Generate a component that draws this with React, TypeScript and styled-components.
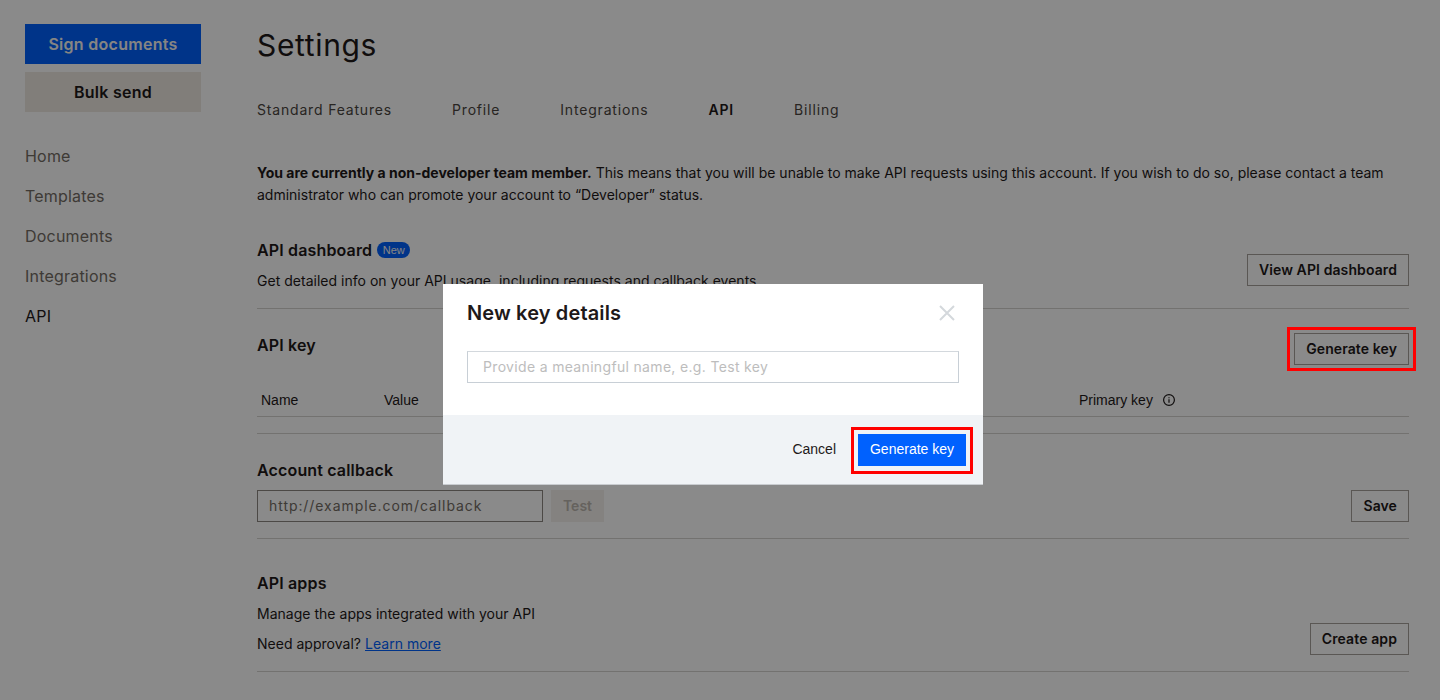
import React from "react";
import styled, { createGlobalStyle, css } from "styled-components";

const Global = createGlobalStyle`
  html, body { margin: 0; padding: 0; height: 700px; overflow: hidden; background: #fff; }
  body { font-family: Inter, "Liberation Sans", sans-serif; color: #1e1919; }
  * { box-sizing: border-box; }
`;

const highlight = css`
  position: relative;
  &::after {
    content: "";
    position: absolute;
    z-index: 20;
    pointer-events: none;
    left: -8px; right: -8px; top: -7px; bottom: -7px;
    border: 3px solid #ff0000;
  }
`;

const Page = styled.div`display: flex; width: 1440px; height: 700px;`;
const Sidebar = styled.aside`width: 257px; padding: 24px 56px 0 25px; flex: none;`;
const SideButton = styled.div<{ $primary?: boolean }>`
  height: 40px; width: 176px; margin-bottom: 8px;
  display: flex; align-items: center; justify-content: center;
  font-size: 16px; font-weight: 600; letter-spacing: .28px;
  background: ${p => (p.$primary ? "#0061fe" : "#eee9e2")};
  color: ${p => (p.$primary ? "#f7f5f2" : "#1e1919")};
`;
const Nav = styled.nav`margin-top: 24px; display: flex; flex-direction: column;`;
const NavItem = styled.a<{ $active?: boolean }>`
  height: 40px; display: flex; align-items: center; font-size: 16px; letter-spacing: .2px;
  color: ${p => (p.$active ? "#1e1919" : "#736c64")};
`;
const Main = styled.main`width: 1152px; flex: none;`;
const Title = styled.h1`
  margin: 25px 0 0; height: 40px; line-height: 40px; font-size: 30px; font-weight: 400; letter-spacing: .65px;
`;
const Tabs = styled.div`display: flex; gap: 60px; margin-top: 35px; height: 20px;`;
const Tab = styled.span<{ $active?: boolean }>`
  font-size: 14px; line-height: 20px; letter-spacing: .82px;
  font-weight: ${p => (p.$active ? 600 : 400)};
  color: ${p => (p.$active ? "#1e1919" : "#4a4540")};
`;
const Notice = styled.p`margin: 42px 0 0; font-size: 14px; line-height: 22px; letter-spacing: 0; color: #1e1919;`;
const Section = styled.section<{ $h: number; $pt: number }>`
  height: ${p => p.$h}px; padding-top: ${p => p.$pt}px;
  border-bottom: 1px solid #d5d3cf;
`;
const Row = styled.div`display: flex; justify-content: space-between; align-items: flex-start;`;
const Heading = styled.h2`
  margin: 0; font-size: 16px; line-height: 24px; font-weight: 600; letter-spacing: .15px;
  display: flex; align-items: center; gap: 5px;
`;
const Badge = styled.span`
  height: 16px; padding: 0 5.5px; border-radius: 8px; background: #0061fe; color: #f7f5f2;
  font-family: "Liberation Sans", sans-serif; letter-spacing: 0;
  font-size: 11px; line-height: 16px; font-weight: 400;
`;
const Text = styled.p<{ $mt?: number }>`
  margin: ${p => p.$mt ?? 0}px 0 0; font-size: 14px; line-height: 22px; letter-spacing: .02px; color: #1e1919;
`;
const OutlineButton = styled.div<{ $mark?: boolean; $top?: number }>`
  height: 32px; padding: 0 11px 2px; border: 1px solid #a6a29c;
  margin-top: ${p => p.$top ?? 0}px;
  display: flex; align-items: center; font-size: 14px; font-weight: 600; letter-spacing: .1px; white-space: nowrap;
  ${p => p.$mark && highlight}
`;
const TableHead = styled.div`
  display: grid; grid-template-columns: 123px 695px 1fr; padding: 3px 0 0 4px; margin-top: 24px; height: 28px;
  border-bottom: 1px solid #d5d3cf;
  font-family: "Liberation Sans", sans-serif; font-size: 14px; line-height: 16px; color: #1e1919;
`;
const HeadCell = styled.span`display: flex; align-items: center; gap: 9px; height: 16px;`;
const InputRow = styled.div`display: flex; gap: 8px; margin-top: 8px;`;
const CallbackInput = styled.div`
  width: 286px; height: 32px; border: 1px solid #8c8781; padding: 0 11px 2px;
  display: flex; align-items: center; font-size: 14px; letter-spacing: .93px; color: #736c64;
`;
const DisabledButton = styled.div`
  width: 53px; height: 32px; background: #f4f1ec; color: #bbb5ae; padding-bottom: 2px;
  display: flex; align-items: center; justify-content: center; font-size: 14px; font-weight: 600;
`;
const Link = styled.a`color: #0061fe; text-decoration: underline;`;
const Overlay = styled.div`
  position: fixed; inset: 0; z-index: 10; background: rgba(0,0,0,.46);
  display: flex; justify-content: center; padding-right: 14px;
`;
const Modal = styled.div`
  width: 540px; height: 201px; margin-top: 284px; background: #fff; display: flex; flex-direction: column;
  border-bottom: 1px solid #c9ccd0;
`;
const ModalBody = styled.div`height: 131px; padding: 17px 24px 0;`;
const ModalHead = styled.div`display: flex; justify-content: space-between; align-items: center; height: 24px;`;
const ModalTitle = styled.h3`margin: 0; font-size: 20px; line-height: 24px; font-weight: 600; letter-spacing: .14px; color: #1e1919;`;
const Close = styled.svg`width: 16px; height: 16px; margin-right: 4px; display: block;`;
const NameInput = styled.div`
  margin-top: 26px; height: 32px; border: 1px solid #c8cfd6; border-top-color: #d3d8dd; padding: 0 15px 2px;
  display: flex; align-items: center; font-size: 14px; letter-spacing: .33px; color: #bdbdbd;
`;
const ModalFoot = styled.div`
  flex: 1; background: #f0f3f6; display: flex; justify-content: flex-end; align-items: center;
  padding: 0 17px 0 0; gap: 22px;
  font-family: "Liberation Sans", sans-serif; font-size: 14px;
`;
const CancelLabel = styled.span`color: #1e1919; margin-top: -2px;`;
const PrimaryButton = styled.div`
  width: 108px; height: 32px; background: #0061fe; color: #fff; padding-bottom: 2px;
  display: flex; align-items: center; justify-content: center;
  ${highlight}
  &::after { z-index: 30; left: -7px; right: -7px; top: -7px; bottom: -8px; }
`;

export default function App() {
  return (
    <>
      <Global />
      <Page>
        <Sidebar>
          <SideButton $primary>Sign documents</SideButton>
          <SideButton>Bulk send</SideButton>
          <Nav>
            <NavItem>Home</NavItem>
            <NavItem>Templates</NavItem>
            <NavItem>Documents</NavItem>
            <NavItem>Integrations</NavItem>
            <NavItem $active>API</NavItem>
          </Nav>
        </Sidebar>
        <Main>
          <Title>Settings</Title>
          <Tabs>
            <Tab>Standard Features</Tab>
            <Tab>Profile</Tab>
            <Tab>Integrations</Tab>
            <Tab $active>API</Tab>
            <Tab>Billing</Tab>
          </Tabs>
          <Notice>
            <strong>You are currently a non-developer team member.</strong> This means that you will be unable to make API requests using this account. If you wish to do so, please contact a team administrator who can promote your account to “Developer” status.
          </Notice>
          <Section $h={103} $pt={32}>
            <Row>
              <div>
                <Heading>API dashboard <Badge>New</Badge></Heading>
                <Text $mt={8}>Get detailed info on your API usage, including requests and callback events.</Text>
              </div>
              <OutlineButton $top={16}>View API dashboard</OutlineButton>
            </Row>
          </Section>
          <Section $h={125} $pt={24}>
            <Row>
              <Heading>API key</Heading>
              <OutlineButton $mark>Generate key</OutlineButton>
            </Row>
            <TableHead>
              <HeadCell>Name</HeadCell>
              <HeadCell>Value</HeadCell>
              <HeadCell>
                Primary key
                <svg width="14" height="14" viewBox="0 0 14 14" fill="none" stroke="#1e1919" strokeWidth="1.2">
                  <circle cx="7" cy="7" r="5.4" />
                  <path d="M7 6.2v3.6M7 4.2v1" />
                </svg>
              </HeadCell>
            </TableHead>
          </Section>
          <Section $h={105} $pt={24}>
            <Row>
              <div>
                <Heading>Account callback</Heading>
                <InputRow>
                  <CallbackInput>http://example.com/callback</CallbackInput>
                  <DisabledButton>Test</DisabledButton>
                </InputRow>
              </div>
              <OutlineButton $top={32}>Save</OutlineButton>
            </Row>
          </Section>
          <Section $h={133} $pt={32}>
            <Row>
              <div>
                <Heading>API apps</Heading>
                <Text $mt={8}>Manage the apps integrated with your API</Text>
                <Text $mt={8}>Need approval? <Link>Learn more</Link></Text>
              </div>
              <OutlineButton $top={52}>Create app</OutlineButton>
            </Row>
          </Section>
        </Main>
      </Page>
      <Overlay>
        <Modal>
          <ModalBody>
            <ModalHead>
              <ModalTitle>New key details</ModalTitle>
              <Close viewBox="0 0 16 16" fill="none" stroke="#d4d8dc" strokeWidth="2">
                <path d="M1 1l14 14M15 1L1 15" />
              </Close>
            </ModalHead>
            <NameInput>Provide a meaningful name, e.g. Test key</NameInput>
          </ModalBody>
          <ModalFoot>
            <CancelLabel>Cancel</CancelLabel>
            <PrimaryButton>Generate key</PrimaryButton>
          </ModalFoot>
        </Modal>
      </Overlay>
    </>
  );
}
